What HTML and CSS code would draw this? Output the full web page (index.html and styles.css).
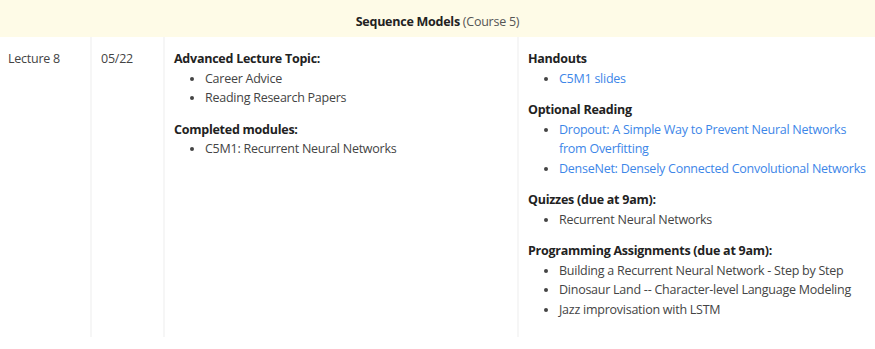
FILE: index.html
```html
<!DOCTYPE html>
<html>
<head>
<meta charset="utf-8">
<link rel="stylesheet" href="styles.css">
</head>
<body>
<table class="schedule">
  <colgroup>
    <col class="c1"><col class="c2"><col class="c3"><col class="c4">
  </colgroup>
  <tr class="course-row">
    <td colspan="4" class="course"><b>Sequence Models</b> (Course 5)</td>
  </tr>
  <tr class="lecture-row">
    <td class="cell">Lecture 8</td>
    <td class="cell">05/22</td>
    <td class="cell">
      <div class="block">
        <div class="heading">Advanced Lecture Topic:</div>
        <ul class="list">
          <li>Career Advice</li>
          <li>Reading Research Papers</li>
        </ul>
      </div>
      <div class="block">
        <div class="heading">Completed modules:</div>
        <ul class="list">
          <li>C5M1: Recurrent Neural Networks</li>
        </ul>
      </div>
    </td>
    <td class="cell">
      <div class="block">
        <div class="heading">Handouts</div>
        <ul class="list">
          <li><a class="link" href="#">C5M1 slides</a></li>
        </ul>
      </div>
      <div class="block">
        <div class="heading">Optional Reading</div>
        <ul class="list">
          <li><a class="link" href="#">Dropout: A Simple Way to Prevent Neural Networks from Overfitting</a></li>
          <li><a class="link" href="#">DenseNet: Densely Connected Convolutional Networks</a></li>
        </ul>
      </div>
      <div class="block">
        <div class="heading">Quizzes (due at 9am):</div>
        <ul class="list">
          <li>Recurrent Neural Networks</li>
        </ul>
      </div>
      <div class="block">
        <div class="heading">Programming Assignments (due at 9am):</div>
        <ul class="list">
          <li>Building a Recurrent Neural Network - Step by Step</li>
          <li>Dinosaur Land -- Character-level Language Modeling</li>
          <li>Jazz improvisation with LSTM</li>
        </ul>
      </div>
    </td>
  </tr>
</table>
</body>
</html>
```
FILE: styles.css
```css
html, body {
  margin: 0;
  padding: 0;
  background: #ffffff;
}
body {
  font-family: "Open Sans", "Noto Sans", sans-serif;
  font-size: 12.5px;
  line-height: 19.5px;
  letter-spacing: -0.25px;
  color: #444444;
}
.schedule {
  width: 100%;
  border-collapse: collapse;
  table-layout: fixed;
}
.c1 { width: 91px; }
.c2 { width: 73px; }
.c3 { width: 354px; }
.course {
  background: #fefbe7;
  height: 37px;
  padding: 7px 0 0 0;
  box-sizing: border-box;
  text-align: center;
  color: #555555;
}
.course b {
  color: #222222;
  font-weight: 700;
}
.cell {
  vertical-align: top;
  padding: 12px 8px 10px 9px;
  border-right: 2px solid #f6f6f6;
}
.cell:first-child { padding-left: 8px; }
.cell:last-child {
  border-right: none;
  padding-right: 6px;
}
.block { margin-bottom: 12px; }
.block:last-child { margin-bottom: 8px; }
.heading {
  font-weight: 700;
  color: #222222;
}
.list {
  margin: 0;
  padding-left: 31px;
}
.link {
  color: #3d86e8;
  text-decoration: none;
}
```
